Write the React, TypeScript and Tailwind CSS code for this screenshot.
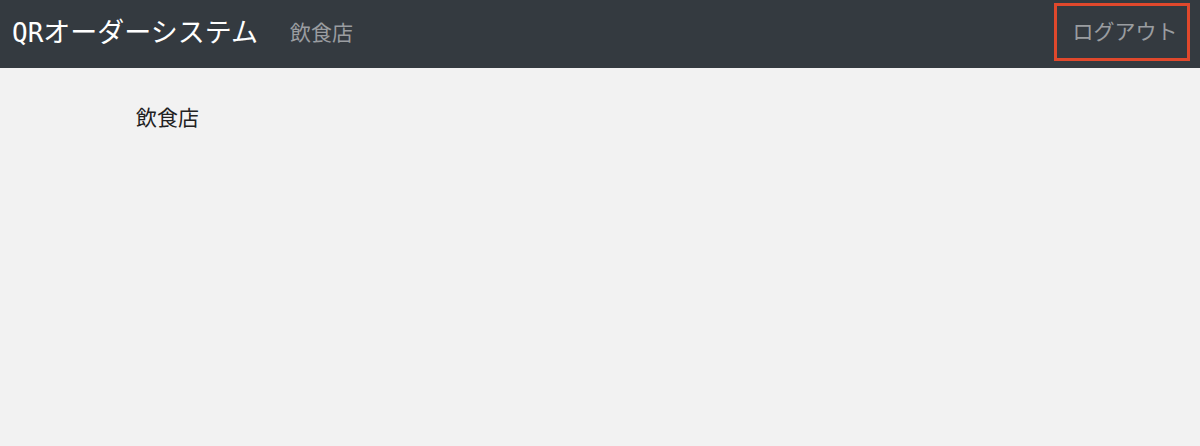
export default function App() {
  return (
    <div className="min-h-[446px] bg-[#f2f2f2]" style={{ fontFamily: '"Noto Sans CJK JP", "Noto Sans", sans-serif' }}>
      <nav className="h-[68px] bg-[#343a40] flex items-center pl-[12px] pr-[10px]">
        <div className="text-white text-[27px] leading-none whitespace-nowrap mb-[6px]">
          <span style={{ fontFamily: '"DejaVu Sans Mono", monospace' }} className="text-[26px]">QR</span>オーダーシステム
        </div>
        <div className="ml-[32px] text-[21px] text-[#9a9da0] leading-none mb-[6px]">飲食店</div>
        <div className="ml-auto h-[58px] w-[136px] border-[3px] border-[#e0482c] flex items-center justify-center pl-[6px] mb-[4px]">
          <span className="text-[21px] text-[#9a9da0] leading-none mb-[4px]">ログアウト</span>
        </div>
      </nav>
      <div className="pl-[136px] pt-[38px] text-[21px] text-[#222] leading-none">飲食店</div>
    </div>
  );
}
